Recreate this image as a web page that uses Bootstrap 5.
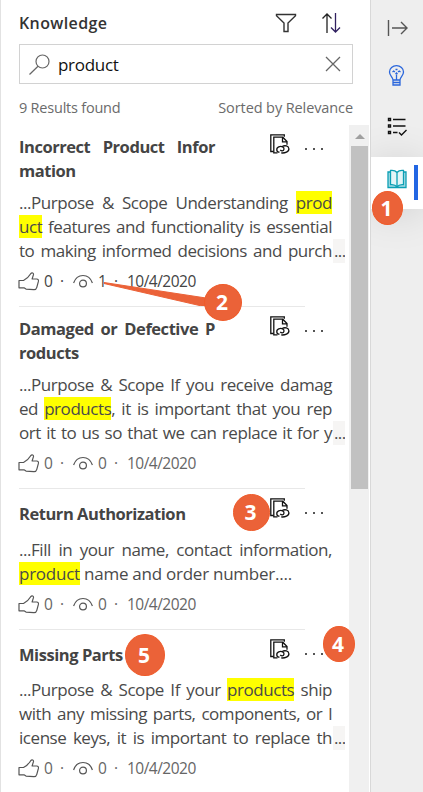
<!DOCTYPE html>
<html lang="en">
<head>
<meta charset="utf-8">
<meta name="viewport" content="width=device-width, initial-scale=1">
<title>Knowledge</title>
<link href="https://cdn.jsdelivr.net/npm/bootstrap@5.3.0/dist/css/bootstrap.min.css" rel="stylesheet">
<style>
body{font-family:"Open Sans","Noto Sans",sans-serif;color:#404040;width:423px;height:792px;overflow:hidden;background:#fff}
svg{display:block;fill:none;flex:none}
.panel{width:371px;height:792px;border-left:1px solid #e2e2e2;border-right:1px solid #d8d8d8}
.panel-top{height:125px;padding:11px 17px 0 18px}
.panel-title{font-size:16px;line-height:24px;font-weight:600;letter-spacing:.38px;color:#333}
.tools{margin-right:12px;gap:24px}
.searchbox{height:40px;border:1px solid #d2d2d2;margin-top:9px;padding:0 11px 0 9px}
.query{font-size:17px;color:#111;letter-spacing:-.3px;margin-left:8px;padding-top:2px}
.summary{font-size:14.5px;line-height:22px;color:#6b6b6b;margin-top:13px;letter-spacing:-.22px;white-space:nowrap}
.summary span + span{letter-spacing:-.1px}
.results{height:667px}
.hits{width:348px;padding:10px 0 0 18px}
.hit + .hit::before{content:"";display:block;width:286px;height:1px;background:#e8e8e8;margin-bottom:10px}
.hit{padding-bottom:13px}
.hit:last-child .snip,.hit:last-child .meta{position:relative;top:-1px}
.hit-head{min-height:31px;margin-bottom:8px}
.hit-title{width:196px;font-size:16.5px;line-height:24px;font-weight:700;letter-spacing:-.45px;color:#444}
.hit-title.align-self-center{padding-bottom:2px}
.acts{height:20px;width:54px;margin-left:55px;margin-top:-1px}
.dots{width:20px;height:2px;margin-top:14px}
.ln{display:block;white-space:nowrap;height:24px;line-height:24px}
.fit{text-align:justify;text-align-last:justify}
.snip{font-size:17px;color:#4a4a4a}
.snip .ln{width:313px;letter-spacing:-.45px}
.snip .loose{letter-spacing:-.25px}
.snip .cut{display:flex;width:327px}
.cut .fit{width:313px;flex:none}
.more{width:12px;background:#f6f5f4;margin-left:1px;padding-left:1px;letter-spacing:-.6px;overflow:hidden}
.hl{background:#ff0;display:inline-block;line-height:23px;height:23px;vertical-align:top}
.meta{height:24px;margin-top:6px;font-size:15.5px;line-height:24px;color:#666;letter-spacing:-.52px}
.hit:first-child .meta{color:#444}
.meta .thumb{margin-left:-1px}
.meta .n1{width:16px;margin-left:5px}
.meta .sep{width:13px}
.meta .n2{margin-left:5px;width:16px}
.scroll{width:20px;background:#f0f0f0;padding:9px 1px 0 2px}
.arrow{margin:0 auto 7px;width:0;height:0;border:5px solid transparent;border-top:0;border-bottom-color:#a0a0a0}
.grip{height:343px;background:#c1c1c1}
.rail{width:52px;height:792px;background:#eee;padding-top:18px}
.rail-item{height:20px;margin-left:16px}
.rail-idea{margin-top:27px}
.rail-list{margin-top:32px}
.rail-tab{width:52px;height:52px;margin-top:20px;background:#fff;padding:8px 5px 0 16px;box-shadow:0 4px 40px rgba(0,0,0,.13)}
.rail-mark{width:4px;height:35px;background:#2266e3}
.callout{position:absolute;background:#eb6238;border:1px solid #ef5b2a;border-radius:50%;color:#fff;font-weight:700;font-size:21px;display:flex;align-items:center;justify-content:center;line-height:1;padding-right:2px}
.c1{left:372px;top:191px;width:31px;height:34px}
.c2{left:204px;top:284px;width:38px;height:37px}
.c3{left:233px;top:494px;width:37px;height:37px}
.c4{left:323px;top:626px;width:32px;height:36px}
.c5{left:125px;top:634px;width:40px;height:42px}
.pointer{position:absolute;left:100px;top:278px}
</style>
</head>
<body>
<svg width="0" height="0" class="position-absolute">
<defs>
<g id="like" stroke="#555" stroke-width="1.2" stroke-linejoin="round"><path d="M1 8.500h4.500C8.500 7 11 4.500 12.700 1.700c1.300-1.700 3.200-.6 2.700 1.200L14.100 7h4.600c1.500 0 2 1.100 1.700 2.400l-1.600 6c-.4 1.600-1.400 2.400-3 2.300L8 17.100l-2-1.300H1z"/></g>
<g id="eye" stroke="#555" stroke-width="1.2"><path d="M.6 11C4 1 16 1 19.400 11"/><circle cx="10" cy="11.500" r="3.400"/></g>
<g id="link" stroke="#111" stroke-width="1.300"><path d="M3.500 17.500H.8V.8h13.500v2"/><path d="M7.500 18.800H3.800V3.200h9l4.200 4.300v3.300M12.500 3.200v4.600H17"/><path d="M9.500 18.200c-3.200 0-3.700-4-.8-5.300 2.800-1.200 6 .2 5.200 2.700-.5 1.400-2.600 1.700-3.600.2M12.200 12.500c2.600-1.500 6.400-.6 6.700 2.200.3 3-4.200 4.700-7.700 4.200"/></g>
<g id="dot3" fill="#555"><rect x="1" width="2" height="2"/><rect x="9" width="2" height="2"/><rect x="17" width="2" height="2"/></g>
</defs>
</svg>
<div class="d-flex position-relative">
<main class="panel d-flex flex-column">
<header class="panel-top">
<div class="d-flex align-items-center">
<div class="panel-title me-auto">Knowledge</div>
<div class="tools d-flex">
<svg width="22" height="22" viewBox="0 0 22 22" stroke="#333" stroke-width="1.4"><path d="M1.500 2.500h19v1.200L13 11v8.500H9V11L1.500 3.700z"/></svg>
<svg width="20" height="22" viewBox="0 0 20 22" stroke="#222" stroke-width="1.300"><path d="M6 21V2M1.500 6.500 6 2l4.500 4.500"/><path d="M14.500 1v19M10 15.500l4.500 4.500 4.500-4.500" stroke="#302060"/></svg>
</div>
</div>
<div class="searchbox d-flex align-items-center">
<svg width="21" height="21" viewBox="0 0 21 21" stroke="#666" stroke-width="1.2"><circle cx="13.500" cy="7.500" r="6.500"/><path d="M9 12.200.5 20.500"/></svg>
<span class="query me-auto">product</span>
<svg width="16" height="16" viewBox="0 0 16 16" stroke="#666" stroke-width="1.300"><path d="m1 1 14 14M15 1 1 15"/></svg>
</div>
<div class="summary d-flex justify-content-between"><span>9 Results found</span><span>Sorted by Relevance</span></div>
</header>
<div class="results d-flex">
<div class="hits">
<article class="hit">
<div class="hit-head d-flex">
<div class="hit-title"><span class="ln fit">Incorrect Product Infor</span><span class="ln">mation</span></div>
<div class="acts d-flex justify-content-between"><svg width="20" height="20"><use href="#link"/></svg><svg class="dots"><use href="#dot3"/></svg></div>
</div>
<div class="snip"><span class="ln fit">...Purpose &amp; Scope Understanding <span class="hl">prod</span></span><span class="ln fit"><span class="hl">uct</span> features and functionality is essential</span><span class="ln cut"><span class="fit">to making informed decisions and purch</span><span class="more">...</span></span></div>
<div class="meta d-flex align-items-center"><svg class="thumb" width="21" height="19"><use href="#like"/></svg><span class="n1">0</span><span class="sep">·</span><svg width="20" height="18"><use href="#eye"/></svg><span class="n2">1</span><span class="sep">·</span><span>10/4/2020</span></div>
</article>
<article class="hit">
<div class="hit-head d-flex">
<div class="hit-title"><span class="ln fit">Damaged or Defective P</span><span class="ln">roducts</span></div>
<div class="acts d-flex justify-content-between"><svg width="20" height="20"><use href="#link"/></svg><svg class="dots"><use href="#dot3"/></svg></div>
</div>
<div class="snip"><span class="ln fit">...Purpose &amp; Scope If you receive damag</span><span class="ln fit">ed <span class="hl">products</span>, it is important that you rep</span><span class="ln cut"><span class="fit">ort it to us so that we can replace it for y</span><span class="more">...</span></span></div>
<div class="meta d-flex align-items-center"><svg class="thumb" width="21" height="19"><use href="#like"/></svg><span class="n1">0</span><span class="sep">·</span><svg width="20" height="18"><use href="#eye"/></svg><span class="n2">0</span><span class="sep">·</span><span>10/4/2020</span></div>
</article>
<article class="hit">
<div class="hit-head d-flex">
<div class="hit-title align-self-center"><span class="ln">Return Authorization</span></div>
<div class="acts d-flex justify-content-between"><svg width="20" height="20"><use href="#link"/></svg><svg class="dots"><use href="#dot3"/></svg></div>
</div>
<div class="snip"><span class="ln fit">...Fill in your name, contact information,</span><span class="ln loose"><span class="hl">product</span> name and order number....</span></div>
<div class="meta d-flex align-items-center"><svg class="thumb" width="21" height="19"><use href="#like"/></svg><span class="n1">0</span><span class="sep">·</span><svg width="20" height="18"><use href="#eye"/></svg><span class="n2">0</span><span class="sep">·</span><span>10/4/2020</span></div>
</article>
<article class="hit">
<div class="hit-head d-flex">
<div class="hit-title align-self-center"><span class="ln">Missing Parts</span></div>
<div class="acts d-flex justify-content-between"><svg width="20" height="20"><use href="#link"/></svg><svg class="dots"><use href="#dot3"/></svg></div>
</div>
<div class="snip"><span class="ln fit">...Purpose &amp; Scope If your <span class="hl">products</span> ship</span><span class="ln fit">with any missing parts, components, or l</span><span class="ln cut"><span class="fit">icense keys, it is important to replace th</span><span class="more">...</span></span></div>
<div class="meta d-flex align-items-center"><svg class="thumb" width="21" height="19"><use href="#like"/></svg><span class="n1">0</span><span class="sep">·</span><svg width="20" height="18"><use href="#eye"/></svg><span class="n2">0</span><span class="sep">·</span><span>10/4/2020</span></div>
</article>
</div>
<div class="scroll"><div class="arrow"></div><div class="grip"></div></div>
</div>
</main>
<nav class="rail overflow-hidden">
<div class="rail-item"><svg width="21" height="20" viewBox="0 0 21 20" stroke="#555" stroke-width="1.400"><path d="M1.500 2v16M5 10h15M14 4l6 6-6 6"/></svg></div>
<div class="rail-item rail-idea"><svg width="20" height="21" viewBox="0 0 20 21" stroke="#2a66dc" stroke-width="1.300"><path d="M6 15c0-3-3.500-4-3.500-8a7 6.300 0 0 1 14 0c0 4-3.500 5-3.500 8zM6 15v5h7v-5M6 17.500h7M9.500 15V9.500M5.500 7l1.200-1 1.200 1M8.500 4.500h2M11 7l1.200-1 1.300 1M8.500 9l1-1 1 1"/></svg></div>
<div class="rail-item rail-list"><svg width="21" height="20" viewBox="0 0 21 20" stroke="#111" stroke-width="1.400"><path d="M6 2.500h12.500M6 9h12.500M6 15.500h4.500M12 15.500l2.500 2.500 5-5"/><path d="M1.500 1.500h2v2h-2zM1.500 8h2v2h-2zM1.500 14.500h2v2h-2z"/></svg></div>
<div class="rail-tab d-flex justify-content-between"><svg class="mt-1" width="20" height="21" viewBox="0 0 20 21" stroke="#0a9fb4" stroke-width="1.300"><path d="M3.500 3H1v15.500h18V3h-2.500" fill="#a8dce4"/><path d="M10 3.500C8.500 1.700 6 1.200 3.500 1.500v14.200c2.500-.3 5 .2 6.500 2.300 1.500-2.100 4-2.600 6.500-2.300V1.500C14 1.200 11.500 1.700 10 3.500zV18" fill="#e2f5f7"/></svg><div class="rail-mark"></div></div>
</nav>
<svg class="pointer" width="110" height="28"><path d="M4 4.500 106 20v9L4 5.500z" fill="#eb6238" stroke="#eb6238"/></svg>
<div class="callout c1">1</div><div class="callout c2">2</div><div class="callout c3">3</div><div class="callout c4">4</div><div class="callout c5">5</div>
</div>
<script src="https://cdn.jsdelivr.net/npm/bootstrap@5.3.0/dist/js/bootstrap.bundle.min.js"></script>
</body>
</html>
